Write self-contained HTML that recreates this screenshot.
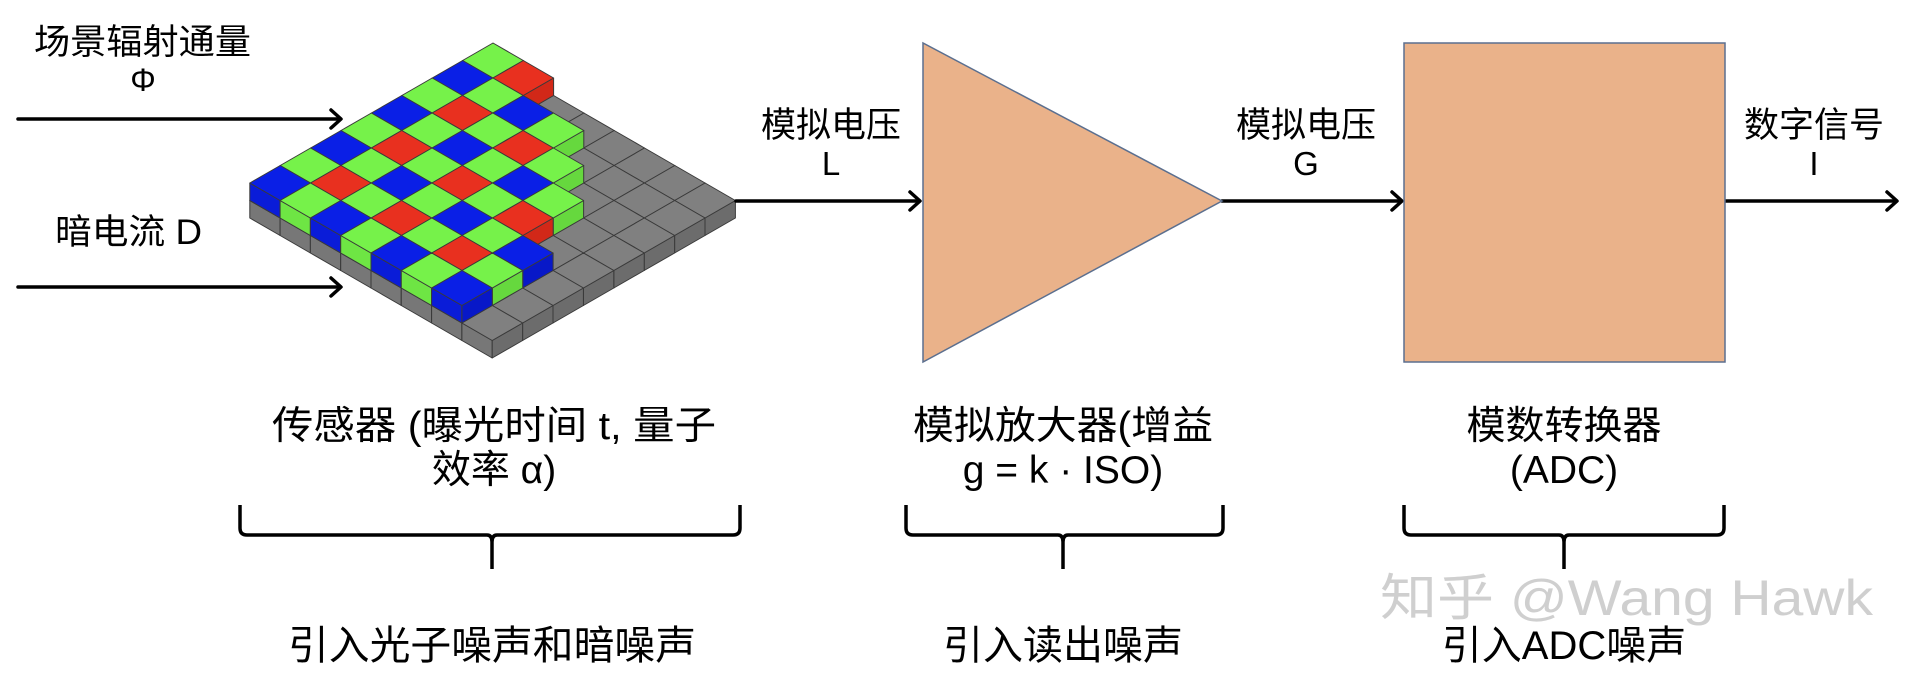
<!DOCTYPE html>
<html><head><meta charset="utf-8"><style>
html,body{margin:0;padding:0;background:#fff;width:1920px;height:684px;overflow:hidden}
svg{display:block}
text{font-family:"Liberation Sans","Noto Sans CJK SC",sans-serif;fill:#000}
</style></head><body>
<svg id="s" width="1920" height="684" viewBox="0 0 1920 684" xmlns="http://www.w3.org/2000/svg">
<g id="sensor"></g>
<g stroke="#000" stroke-width="3.5" fill="none" stroke-linecap="round" stroke-linejoin="round">
<line x1="18" y1="119" x2="340" y2="119"/><polyline points="331,110 341,119 331,128"/>
<line x1="18" y1="287" x2="340" y2="287"/><polyline points="331,278 341,287 331,296"/>
<line x1="736" y1="201" x2="919" y2="201"/><polyline points="910,192 920,201 910,210"/>
<line x1="1222" y1="201" x2="1401" y2="201"/><polyline points="1392,192 1402,201 1392,210"/>
<line x1="1725" y1="201" x2="1896" y2="201"/><polyline points="1887,192 1897,201 1887,210"/>
</g>
<polygon points="923,43 923,362 1222,201" fill="#eab28a" stroke="#5b6f8f" stroke-width="1.5"/>
<rect x="1404" y="43" width="321" height="319" fill="#eab28a" stroke="#5b6f8f" stroke-width="1.5"/>
<g stroke="#000" stroke-width="3.5" fill="none">
<path d="M240,505 V528 Q240,535 247,535 H487 Q492,535 492,542 V569 M492,542 Q492,535 497,535 H733 Q740,535 740,528 V505"/>
<path d="M906,505 V528 Q906,535 913,535 H1058 Q1063,535 1063,542 V569 M1063,542 Q1063,535 1068,535 H1216 Q1223,535 1223,528 V505"/>
<path d="M1404,505 V528 Q1404,535 1411,535 H1559 Q1564,535 1564,542 V569 M1564,542 Q1564,535 1569,535 H1717 Q1724,535 1724,528 V505"/>
</g>
<text x="34" y="54" font-size="35" textLength="217" lengthAdjust="spacingAndGlyphs">场景辐射通量</text>
<text x="143" y="91" font-size="32" text-anchor="middle">Φ</text>
<text x="55" y="244" font-size="35" textLength="147" lengthAdjust="spacingAndGlyphs">暗电流 D</text>
<text x="831" y="137" font-size="35" text-anchor="middle">模拟电压</text>
<text x="831" y="175" font-size="33" text-anchor="middle">L</text>
<text x="1306" y="137" font-size="35" text-anchor="middle">模拟电压</text>
<text x="1306" y="175" font-size="33" text-anchor="middle">G</text>
<text x="1814" y="137" font-size="35" text-anchor="middle">数字信号</text>
<text x="1814" y="175" font-size="33" text-anchor="middle">I</text>
<text x="494" y="439" font-size="39" text-anchor="middle" textLength="444" lengthAdjust="spacingAndGlyphs">传感器 (曝光时间 t, 量子</text>
<text x="494" y="483" font-size="39" text-anchor="middle">效率 α)</text>
<text x="1063" y="439" font-size="39" text-anchor="middle" textLength="300" lengthAdjust="spacingAndGlyphs">模拟放大器(增益</text>
<text x="1063" y="483" font-size="39" text-anchor="middle">g = k · ISO)</text>
<text x="1564" y="439" font-size="39" text-anchor="middle">模数转换器</text>
<text x="1564" y="483" font-size="39" text-anchor="middle">(ADC)</text>
<text x="1380" y="615" font-size="50" fill="#cccccc" style="fill:#cfcfcf" textLength="493" lengthAdjust="spacingAndGlyphs">知乎 @Wang Hawk</text>
<text x="492" y="659" font-size="40" text-anchor="middle" textLength="408" lengthAdjust="spacingAndGlyphs">引入光子噪声和暗噪声</text>
<text x="1063" y="659" font-size="40" text-anchor="middle">引入读出噪声</text>
<text x="1564" y="659" font-size="40" text-anchor="middle">引入ADC噪声</text>
</svg>
<script>
(function(){
var g=document.getElementById('sensor'),ns='http://www.w3.org/2000/svg';
var ux=30.4,uy=-17.5,vx=30.3,vy=17.5,h=17.5,Px=493,Py=43;
var f=[1,3,4,5,5,6,6,6];
function poly(pts,fill){var p=document.createElementNS(ns,'polygon');p.setAttribute('points',pts.map(function(q){return q[0].toFixed(1)+','+q[1].toFixed(1)}).join(' '));p.setAttribute('fill',fill);p.setAttribute('stroke','#3a3a3a');p.setAttribute('stroke-width','1');p.setAttribute('stroke-linejoin','round');g.appendChild(p);}
function cube(a,b,oy,top,side,side2){
var Ax=Px+a*vx-b*ux,Ay=Py+oy+a*vy-b*uy;
var A=[Ax,Ay],B=[Ax+vx,Ay+vy],C=[Ax+vx-ux,Ay+vy-uy],D=[Ax-ux,Ay-uy];
poly([D,C,[C[0],C[1]+h],[D[0],D[1]+h]],side);
poly([B,C,[C[0],C[1]+h],[B[0],B[1]+h]],side2);
poly([A,B,C,D],top);}
var cells=[];for(var a=0;a<8;a++)for(var b=0;b<8;b++)cells.push([a,b]);
cells.sort(function(p,q){return (p[0]+p[1])-(q[0]+q[1])});
cells.forEach(function(c){cube(c[0],c[1],h,'#808080','#777','#6c6c6c');});
cells.forEach(function(c){var a=c[0],b=c[1];if(a>f[b])return;
var col;if(a%2==b%2)col=['#76f24a','#6ee544','#66d83e'];else if(a%2==1)col=['#e8301f','#e02c1c','#d22818'];else col=['#0a1fe6','#0a1cd8','#0818c8'];
cube(a,b,0,col[0],col[1],col[2]);});
})();
</script>
</body></html>
